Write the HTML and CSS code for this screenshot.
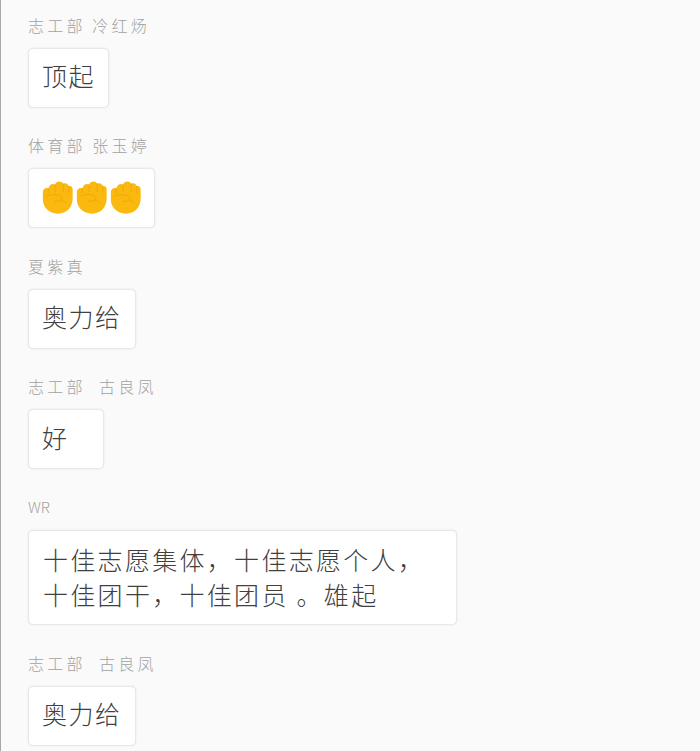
FILE: index.html
```html
<!DOCTYPE html>
<html lang="zh-CN">
<head>
    <meta charset="UTF-8">
    <meta name="viewport" content="width=device-width, initial-scale=1.0">
    <title>留言</title>
    <link rel="stylesheet" href="styles.css">
</head>
<body>
    <svg class="defs" width="0" height="0">
        <symbol id="fist" viewBox="0 0 30 32">
            <path fill="#fbb80f" d="M.8 11c0-2.400 1.700-4.200 3.700-4.200.6 0 1.200.1 1.700.4C6.800 4.400 8.500 2.800 10.500 2.800c.8 0 1.500.2 2.100.6C13.300 1.400 15 .5 16.800.5c1.700 0 3 .8 3.800 2.100.5-.2 1-.3 1.600-.3 1.800 0 3.200 1.100 3.700 2.700.3-.1.700-.1 1-.1 1.700 0 2.800 1.500 2.800 3.400V17c0 8.600-6 14.700-14.200 14.700C7 31.700.8 25.800.8 18z"/>
            <path fill="none" stroke="#eba704" stroke-width=".8" stroke-linecap="round" stroke-linejoin="round" d="M6.200 7.500v4M12.600 3.800v6.700M20.600 2.900v7.300M25.900 5.300v6.200M3.800 14.800c3.800-2 8.800-2 13-.8 2.700.8 3.300 3.300 1.500 4.600-1.400 1-3.800 1.200-6.300 1.100M18.600 18.300c2 .5 3.600 1.500 4.400 3"/>
        </symbol>
    </svg>

    <div class="message">
        <div class="name">志工部 冷红炀</div>
        <div class="bubble">顶起</div>
    </div>
    <div class="message">
        <div class="name">体育部 张玉婷</div>
        <div class="bubble bubble-emoji">
            <svg class="fist"><use href="#fist"/></svg>
            <svg class="fist"><use href="#fist"/></svg>
            <svg class="fist"><use href="#fist"/></svg>
        </div>
    </div>
    <div class="message">
        <div class="name">夏紫真</div>
        <div class="bubble">奥力给</div>
    </div>
    <div class="message">
        <div class="name">志工部&nbsp;&nbsp;古良凤</div>
        <div class="bubble">好&nbsp;&nbsp;&nbsp;</div>
    </div>
    <div class="message">
        <div class="name name-latin">WR</div>
        <div class="bubble bubble-long">十佳志愿集体，十佳志愿个人，<br>十佳团干，十佳团员 。雄起</div>
    </div>
    <div class="message">
        <div class="name">志工部&nbsp;&nbsp;古良凤</div>
        <div class="bubble">奥力给</div>
    </div>
</body>
</html>
```
FILE: styles.css
```css
body {
    margin: 0;
    padding: 14.8px 0 0 28px;
    height: 751px;
    box-sizing: border-box;
    overflow: hidden;
    background: #fafafa;
    border-left: 1px solid #a8a8a8;
    font-family: "Noto Sans CJK SC", "Liberation Sans", sans-serif;
    font-weight: 300;
}
.defs {
    position: absolute;
}
.message {
    margin-bottom: 27.5px;
}
.name {
    font-size: 16px;
    line-height: 20px;
    letter-spacing: 3.2px;
    color: #a2a2a2;
    margin-bottom: 13px;
    margin-left: -1px;
}
.name-latin {
    font-size: 15px;
    letter-spacing: 0;
}
.bubble {
    width: fit-content;
    margin-left: -1px;
    padding: 9.5px 13px 13.5px;
    background: #fff;
    border: 1px solid #e8e8e8;
    border-radius: 5px;
    box-shadow: 0 0 2px rgba(0, 0, 0, 0.1);
    font-size: 25px;
    line-height: 35px;
    letter-spacing: 1.5px;
    color: #404040;
}
.bubble-emoji {
    display: flex;
    gap: 3px;
    padding: 0 13px;
    height: 58px;
    align-items: center;
}
.fist {
    width: 31px;
    height: 33px;
    margin-top: -1px;
}
.bubble-long {
    width: 429px;
    box-sizing: border-box;
    padding: 11px 13px 12.5px 14px;
    letter-spacing: 2.3px;
}
```
